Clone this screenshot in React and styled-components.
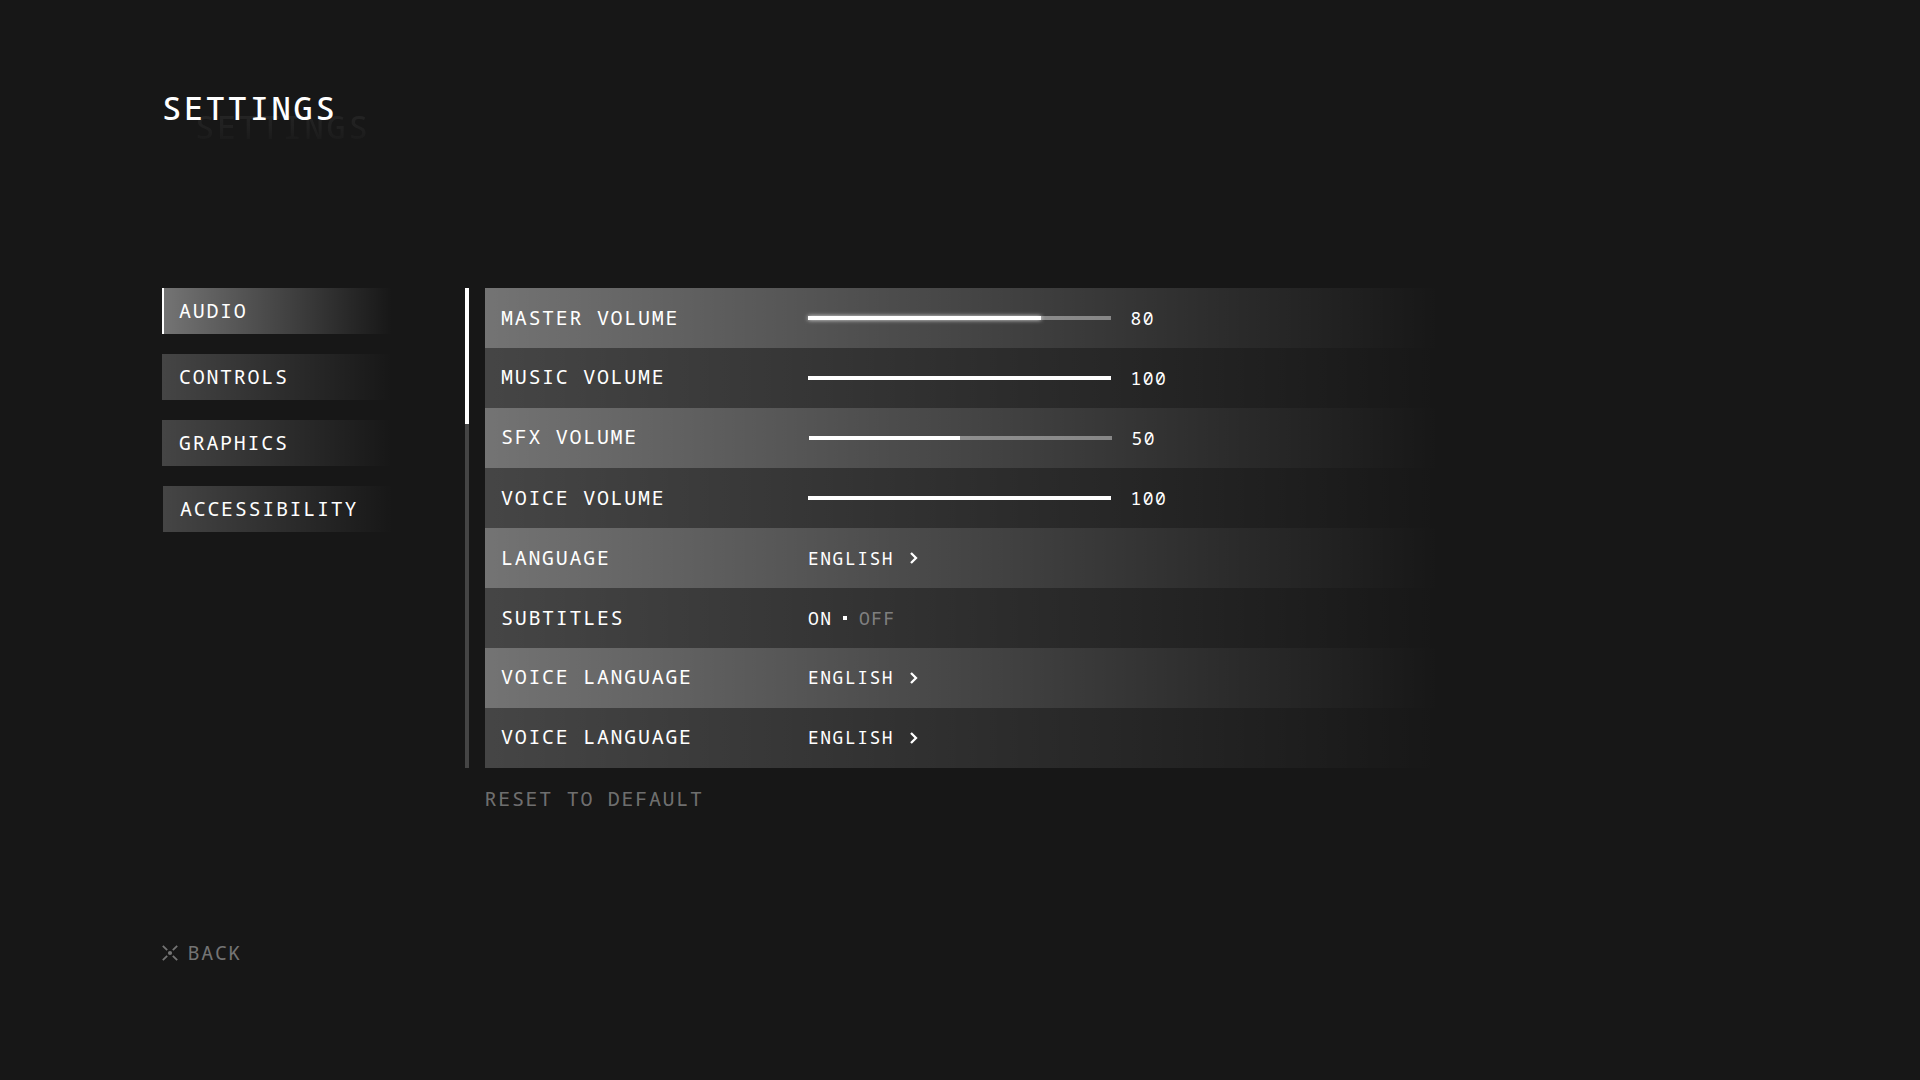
import React from 'react';
import styled, { createGlobalStyle } from 'styled-components';

const GlobalStyle = createGlobalStyle`
  * {
    box-sizing: border-box;
  }

  body {
    margin: 0;
    background: #171717;
    color: #ffffff;
    font-family: 'Noto Sans Mono', 'DejaVu Sans Mono', 'Liberation Mono', monospace;
    font-weight: 450;
  }
`;

const Screen = styled.main`
  width: 1920px;
  height: 1080px;
  padding: 86px 0 0 162px;
  display: flex;
  flex-direction: column;
  align-items: flex-start;
  overflow: hidden;
  background: #171717;
`;

const Title = styled.h1`
  position: relative;
  margin: 0;
  height: 43px;
  font-size: 32px;
  line-height: 43px;
  font-weight: 500;
  letter-spacing: 2.72px;
`;

const TitleText = styled.span`
  position: relative;
`;

const TitleEcho = styled.span`
  position: absolute;
  left: 33px;
  top: 19px;
  color: transparent;
  background: linear-gradient(180deg, rgba(255, 255, 255, 0.06) 25%, rgba(255, 255, 255, 0.015) 85%);
  background-clip: text;
`;

const Body = styled.div`
  display: flex;
  align-items: flex-start;
  margin-top: 159px;
`;

const Nav = styled.nav`
  width: 303px;
  display: flex;
  flex-direction: column;
  gap: 20px;
`;

const NavItem = styled.a`
  width: 230px;
  height: 46px;
  margin-left: ${(p) => p.$indent || 0}px;
  padding: 9px 0 0 ${(p) => (p.$active ? 15 : 17)}px;
  border-left: ${(p) => (p.$active ? '2px solid #ffffff' : 'none')};
  background: linear-gradient(90deg, rgba(255, 255, 255, ${(p) => (p.$active ? 0.4 : 0.2)}), rgba(255, 255, 255, 0));
  font-size: 20px;
  line-height: 27px;
  letter-spacing: 1.7px;
`;

const ScrollTrack = styled.div`
  width: 4px;
  height: 480px;
  margin-right: 16px;
  background: rgba(255, 255, 255, 0.2);
`;

const ScrollThumb = styled.div`
  height: 136px;
  background: #ffffff;
`;

const Panel = styled.section`
  width: 955px;
  display: flex;
  flex-direction: column;
`;

const Row = styled.div`
  height: 60px;
  display: grid;
  grid-template-columns: 307px 1fr;
  padding-left: 16px;
  background: linear-gradient(90deg, rgba(255, 255, 255, ${(p) => (p.$light ? 0.4 : 0.2)}), rgba(255, 255, 255, 0));
`;

const Label = styled.span`
  padding-top: ${(p) => (p.$raised ? 15 : 16)}px;
  font-size: 20px;
  line-height: 27px;
  letter-spacing: 1.7px;
`;

const Control = styled.div`
  display: flex;
  align-items: flex-start;
  padding-left: ${(p) => p.$indent || 0}px;
`;

const Track = styled.div`
  width: 303px;
  height: 4px;
  margin: 28px 19.5px 0 0;
  background: rgba(255, 255, 255, 0.4);
`;

const Fill = styled.div`
  height: 4px;
  background: #ffffff;
  box-shadow: ${(p) => (p.$glow ? '0 0 4px rgba(255, 255, 255, 0.85)' : 'none')};
`;

const Value = styled.span`
  padding-top: ${(p) => (p.$raised ? 17 : 18)}px;
  font-size: 18px;
  line-height: 24px;
  letter-spacing: 1.5px;
  color: ${(p) => (p.$muted ? 'rgba(255, 255, 255, 0.4)' : '#ffffff')};
`;

const Chevron = styled.svg`
  width: 8px;
  height: 12px;
  margin: 24px 0 0 16px;
`;

const Dot = styled.span`
  width: 4px;
  height: 4px;
  margin: 28px 12px 0 10.3px;
  background: #ffffff;
`;

const Reset = styled.button`
  margin: 17px 0 0 -0.5px;
  padding: 0;
  border: 0;
  background: none;
  font: inherit;
  text-align: left;
  color: rgba(255, 255, 255, 0.4);
  font-size: 20px;
  line-height: 27px;
  letter-spacing: 1.7px;
`;

const Back = styled.a`
  display: flex;
  align-items: center;
  gap: 9.5px;
  margin-top: 127px;
  color: #747474;
  font-size: 20px;
  line-height: 27px;
  letter-spacing: 1.7px;
`;

const BackIcon = styled.svg`
  width: 16px;
  height: 16px;
`;

const tabs = [
  { name: 'AUDIO', active: true },
  { name: 'CONTROLS' },
  { name: 'GRAPHICS' },
  { name: 'ACCESSIBILITY', indent: 1 },
];

const rows = [
  { label: 'MASTER VOLUME', value: 80, fill: 233, glow: true },
  { label: 'MUSIC VOLUME', value: 100, fill: 303, raised: true },
  { label: 'SFX VOLUME', value: 50, fill: 151, raised: true, indent: 1 },
  { label: 'VOICE VOLUME', value: 100, fill: 303 },
  { label: 'LANGUAGE', choice: 'ENGLISH' },
  { label: 'SUBTITLES', toggle: true },
  { label: 'VOICE LANGUAGE', choice: 'ENGLISH', raised: true, raisedValue: true },
  { label: 'VOICE LANGUAGE', choice: 'ENGLISH', raised: true, raisedValue: true },
];

function Setting({ row }) {
  if (row.toggle) {
    return (
      <Control>
        <Value>ON</Value>
        <Dot />
        <Value $muted>OFF</Value>
      </Control>
    );
  }
  if (row.choice) {
    return (
      <Control>
        <Value $raised={row.raisedValue}>{row.choice}</Value>
        <Chevron viewBox="0 0 8 12" fill="none" stroke="#ffffff" strokeWidth="2.3">
          <path d="M1 1L6 6L1 11" />
        </Chevron>
      </Control>
    );
  }
  return (
    <Control $indent={row.indent}>
      <Track>
        <Fill $glow={row.glow} style={{ width: row.fill }} />
      </Track>
      <Value>{row.value}</Value>
    </Control>
  );
}

export default function App() {
  return (
    <>
      <GlobalStyle />
      <Screen>
        <Title>
          <TitleEcho aria-hidden="true">SETTINGS</TitleEcho>
          <TitleText>SETTINGS</TitleText>
        </Title>
        <Body>
          <Nav>
            {tabs.map((tab) => (
              <NavItem key={tab.name} $active={tab.active} $indent={tab.indent}>
                {tab.name}
              </NavItem>
            ))}
          </Nav>
          <ScrollTrack>
            <ScrollThumb />
          </ScrollTrack>
          <Panel>
            {rows.map((row, i) => (
              <Row key={i} $light={i % 2 === 0}>
                <Label $raised={row.raised}>{row.label}</Label>
                <Setting row={row} />
              </Row>
            ))}
            <Reset>RESET TO DEFAULT</Reset>
          </Panel>
        </Body>
        <Back>
          <BackIcon viewBox="0 0 16 16" stroke="currentColor" strokeWidth="1.8" fill="currentColor">
            <path d="M0.8 0.8L5.2 5.2M15.2 0.8L10.8 5.2M0.8 15.2L5.2 10.8M15.2 15.2L10.8 10.8" />
            <circle cx="8" cy="8" r="2.1" stroke="none" />
          </BackIcon>
          BACK
        </Back>
      </Screen>
    </>
  );
}
